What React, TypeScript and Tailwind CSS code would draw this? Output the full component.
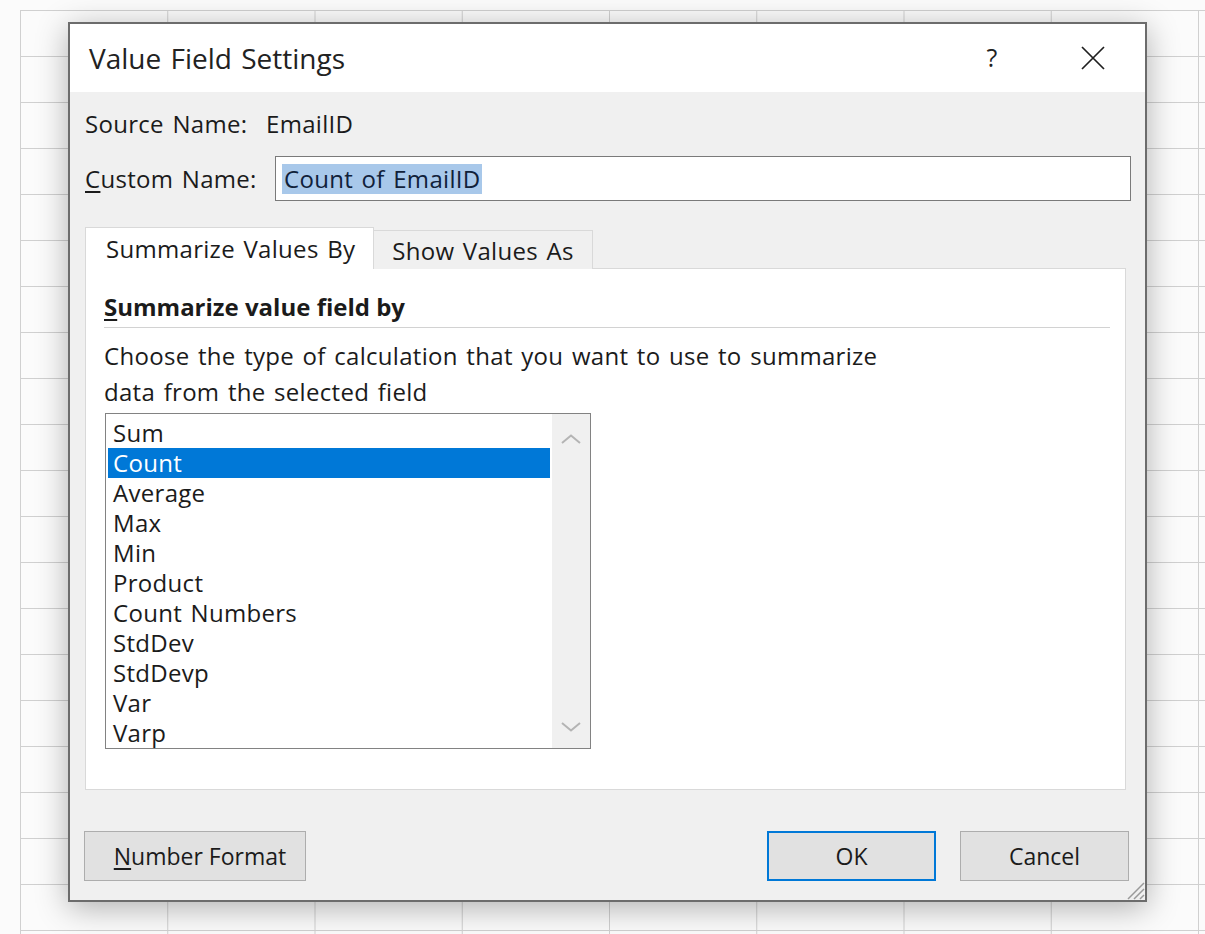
const summaryFunctions = [
  "Sum",
  "Count",
  "Average",
  "Max",
  "Min",
  "Product",
  "Count Numbers",
  "StdDev",
  "StdDevp",
  "Var",
  "Varp",
];

function CloseGlyph() {
  return (
    <svg width="26" height="26" viewBox="0 0 26 26" fill="none">
      <path d="M2 2 L24 24 M24 2 L2 24" stroke="#1f1f1f" strokeWidth="1.7" />
    </svg>
  );
}

// flat scrollbar arrow, greyed out because the list does not scroll
function ScrollArrow({ up }: { up?: boolean }) {
  return (
    <svg width="20" height="10" viewBox="0 0 20 10" fill="none">
      <path
        d={up ? "M1 9 L10 1.5 L19 9" : "M1 1 L10 8.5 L19 1"}
        stroke="#b4b4b4"
        strokeWidth="2"
      />
    </svg>
  );
}

function ResizeGrip() {
  return (
    <svg width="22" height="22" viewBox="0 0 22 22" fill="none">
      <path d="M21 5 L5 21 M21 11 L11 21 M21 17 L17 21" stroke="#9a9a9a" strokeWidth="1.5" />
    </svg>
  );
}

export default function App() {
  const selected = "Count";

  return (
    <div className="min-h-[934px] w-full overflow-hidden bg-[#fbfbfb] pl-[20px] pt-[10px] font-['Open_Sans',sans-serif] text-[24px] tracking-[0.3px] [word-spacing:2px] text-[#1b1b1b]">
      <div className="h-[924px] bg-[linear-gradient(to_right,#d0d0d0_1px,transparent_1px),linear-gradient(to_bottom,#d0d0d0_1px,transparent_1px)] bg-[size:147.25px_46px] pl-[48px] pt-[12px]">
        {/* dialog window */}
        <div className="relative flex h-[880px] w-[1079px] flex-col border-2 border-[#6c6c6c] bg-[#f0f0f0] shadow-[0_6px_30px_rgba(0,0,0,0.3)]">
          <div className="flex h-[68px] items-center bg-white pl-[19px]">
            <span className="text-[28px] tracking-normal text-[#222]">Value Field Settings</span>
            <span className="ml-auto flex w-[46px] justify-center text-[25px] text-[#222]">?</span>
            <span className="ml-[55px] mr-[29px] flex w-[46px] justify-center">
              <CloseGlyph />
            </span>
          </div>

          <div className="flex flex-1 flex-col pl-[15px] pr-[14px]">
            <div className="mt-[17px] flex h-[30px] items-center">
              <span className="w-[181px]">Source Name:</span>
              <span>EmailID</span>
            </div>

            <div className="mt-[17px] flex h-[45px] items-center">
              <span className="w-[190px]">
                <span className="underline underline-offset-[3px]">C</span>ustom Name:
              </span>
              <div className="flex h-[45px] flex-1 items-center border border-[#7a7a7a] bg-white pl-[6px]">
                <span className="bg-[#a8c8ea] px-[2px] leading-[30px] text-[#10213a]">Count of EmailID</span>
              </div>
            </div>

            {/* tabs */}
            <div className="relative z-10 -mb-px mt-[26px] flex h-[42px] items-end">
              <div className="flex h-[42px] w-[289px] items-center border border-b-0 border-[#d9d9d9] bg-white pl-[20px]">
                Summarize Values By
              </div>
              <div className="flex h-[39px] w-[219px] items-center justify-center border border-b-0 border-l-0 border-[#d9d9d9] bg-[#f0f0f0] pt-[2px]">
                Show Values As
              </div>
            </div>

            <div className="h-[522px] w-[1041px] border border-[#d9d9d9] bg-white pl-[18px] pr-[15px] pt-[22px]">
              <div className="border-b border-[#d2d2d2] pb-[4px] font-bold leading-[32px] tracking-normal [word-spacing:0px]">
                <span className="underline underline-offset-[3px]">S</span>ummarize value field by
              </div>
              <p className="mt-[10px] leading-[36px]">
                Choose the type of calculation that you want to use to summarize
                <br />
                data from the selected field
              </p>

              <div className="ml-px mt-[3px] flex h-[336px] w-[486px] border border-[#828282]">
                <div className="flex-1 pl-[2px] pr-[2px] pt-[4px]">
                  {summaryFunctions.map((name) => (
                    <div
                      key={name}
                      className={`h-[30px] pl-[5px] leading-[30px] ${
                        name === selected ? "bg-[#0078d7] text-white" : ""
                      }`}
                    >
                      {name}
                    </div>
                  ))}
                </div>
                <div className="flex w-[38px] flex-col items-center justify-between bg-[#f0f0f0] pb-[16px] pt-[20px]">
                  <ScrollArrow up />
                  <ScrollArrow />
                </div>
              </div>
            </div>

            {/* dialog buttons */}
            <div className="mt-[41px] flex h-[50px] pr-[2px] text-[23px] tracking-normal [word-spacing:0px]">
              <button className="-ml-px h-[50px] w-[222px] border border-[#adadad] bg-[#e1e1e1] pl-[10px]">
                <span className="underline underline-offset-[3px]">N</span>umber Format
              </button>
              <button className="ml-auto h-[50px] w-[169px] border-2 border-[#0078d7] bg-[#e1e1e1]">
                OK
              </button>
              <button className="ml-[24px] h-[50px] w-[169px] border border-[#adadad] bg-[#e1e1e1]">
                Cancel
              </button>
            </div>
          </div>

          <div className="absolute bottom-0 right-0">
            <ResizeGrip />
          </div>
        </div>
      </div>
    </div>
  );
}
